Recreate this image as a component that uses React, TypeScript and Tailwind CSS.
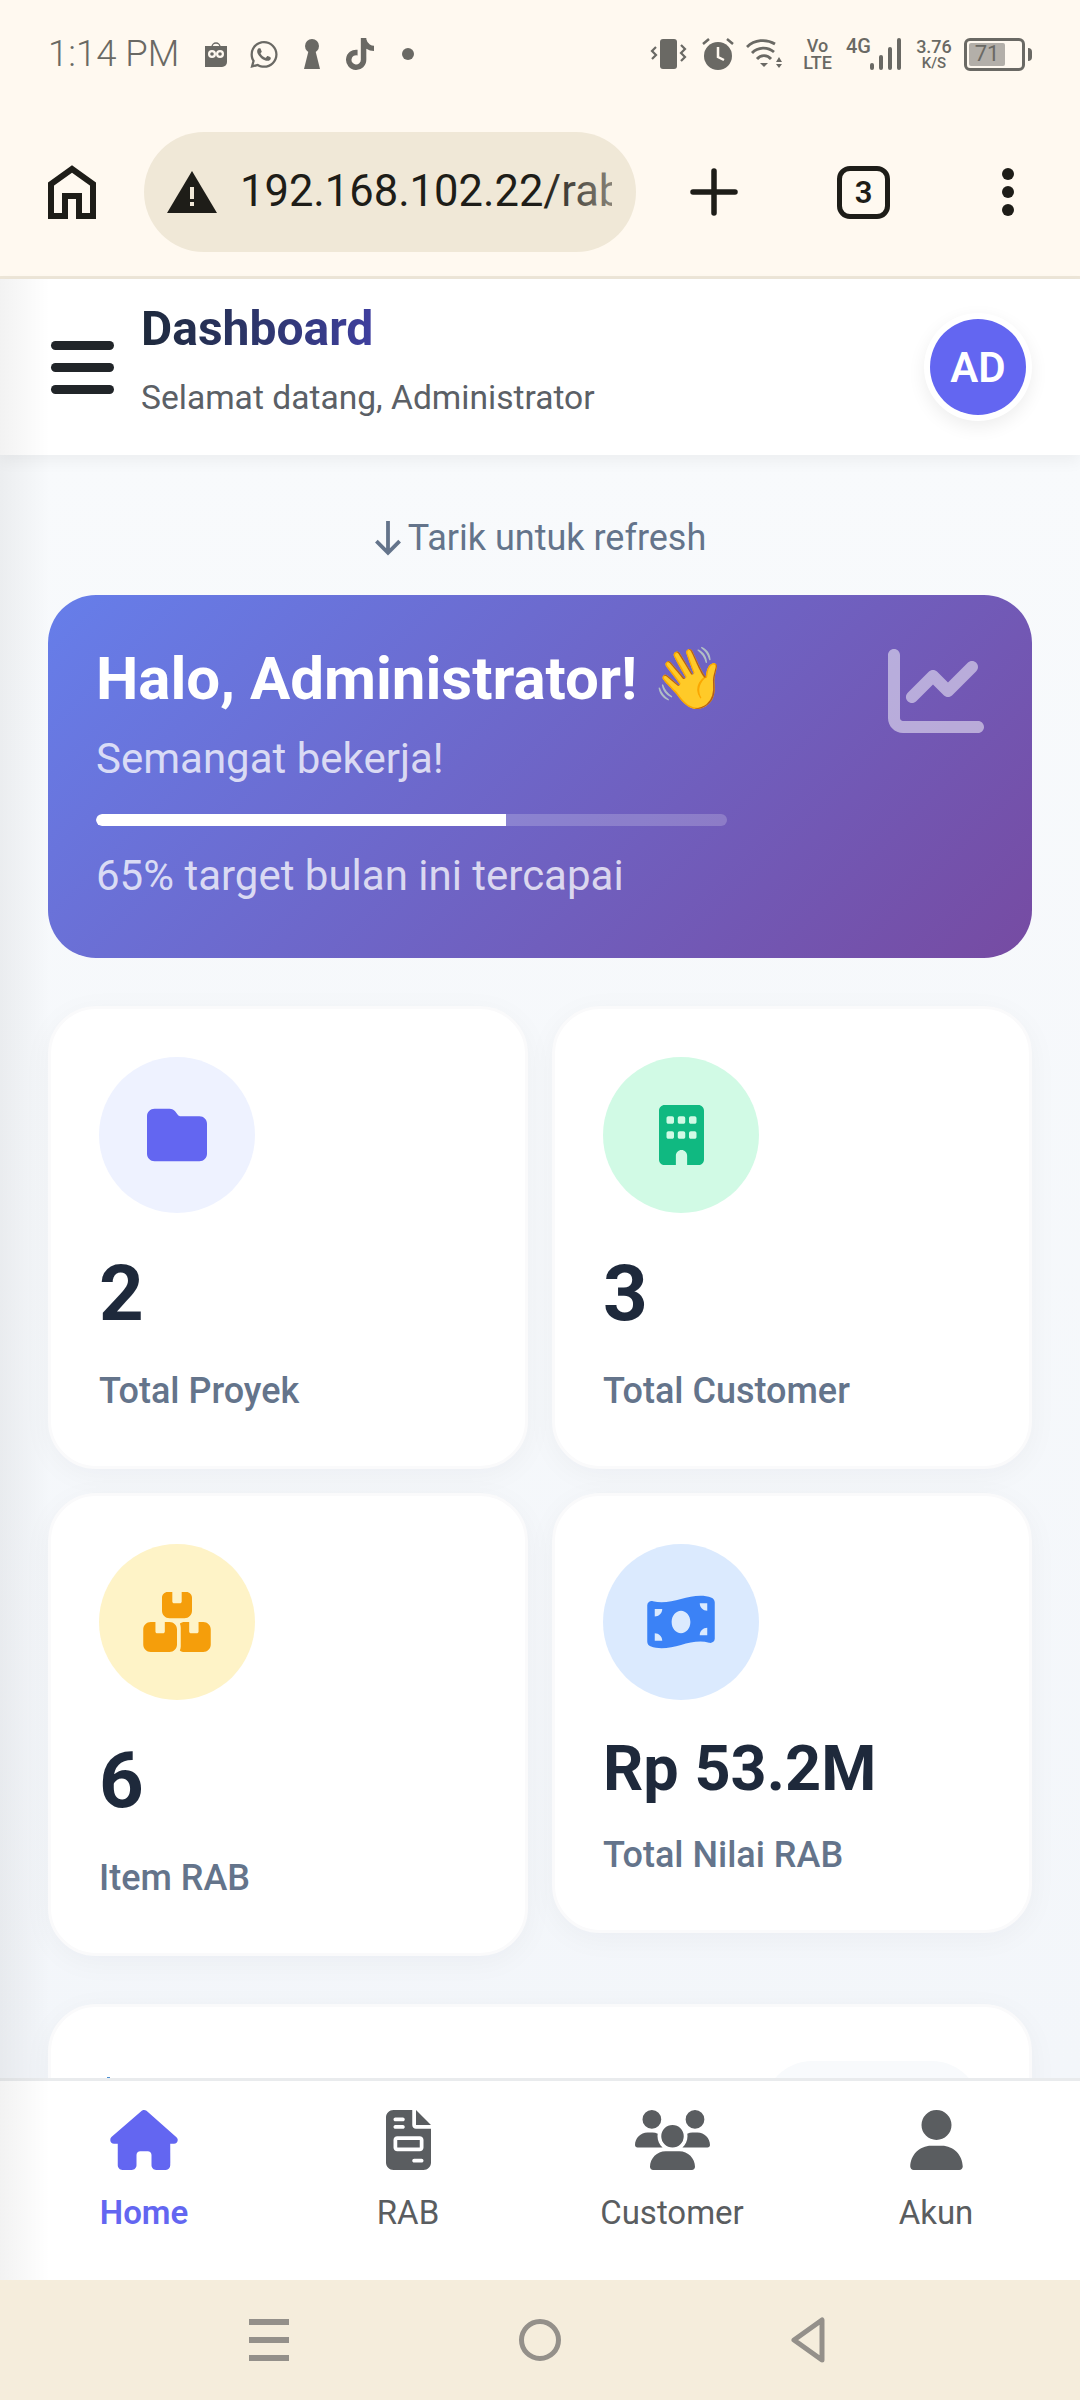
import React from "react";
import { FaFolder, FaBuilding, FaBoxesStacked, FaMoneyBillWave, FaChartLine, FaHouse, FaFileInvoice, FaUsers, FaUser, FaWhatsapp, FaTiktok } from "react-icons/fa6";

function StatusBar() {
  return (
    <div className="h-[108px] pl-[48px] pr-[48px] flex items-center justify-between text-[#6a6964]">
      <div className="flex items-center">
        <span className="text-[36.500px] font-light leading-none w-[156px] whitespace-nowrap">1:14 PM</span>
        <svg viewBox="0 0 24 27" className="w-[24px] h-[27px]">
          <path d="M8 6a4 4 0 0 1 8 0" fill="none" stroke="currentColor" strokeWidth="1.4" />
          <path d="M1 5h22v16a5 5 0 0 1-5 5H1z" fill="currentColor" />
          <circle cx="8" cy="13" r="4" fill="#fff9f0" /><circle cx="16" cy="13" r="4" fill="#fff9f0" />
          <circle cx="8" cy="13" r="1.8" fill="currentColor" /><circle cx="16" cy="13" r="1.8" fill="currentColor" />
        </svg>
        <FaWhatsapp className="w-[30px] h-[31px] ml-[21px]" />
        <svg viewBox="0 0 16 30" className="w-[16px] h-[30px] ml-[25px]">
          <circle cx="8" cy="7" r="7" fill="currentColor" /><path d="M5 10h6l5 20H0z" fill="currentColor" />
        </svg>
        <FaTiktok className="w-[30px] h-[32px] ml-[25px]" />
        <div className="w-[12px] h-[12px] rounded-full bg-current ml-[27px]" />
      </div>
      <div className="flex items-center">
        <svg viewBox="0 0 37 30" className="w-[37px] h-[30px]">
          <rect x="10" y="0" width="17" height="30" rx="3" fill="currentColor" />
          <path d="M6 8 2 12l4 4-4 4M31 6l4 4-4 4 4 4-4 4" fill="none" stroke="currentColor" strokeWidth="2.200" />
        </svg>
        <svg viewBox="0 0 32 32" className="w-[32px] h-[32px] ml-[15px]">
          <circle cx="16" cy="18" r="14" fill="currentColor" />
          <path d="M16 9v10l6 3" fill="none" stroke="#fff9f0" strokeWidth="2.500" />
          <path d="M1 6 7 1M31 6l-6-5" stroke="currentColor" strokeWidth="2.500" />
        </svg>
        <svg viewBox="0 0 38 30" className="w-[38px] h-[30px] ml-[12px]">
          <path d="M1 8a23 23 0 0 1 28-3M6 14a16 16 0 0 1 22-1M11 20a9 9 0 0 1 14 0" fill="none" stroke="currentColor" strokeWidth="2.800" />
          <path d="M14 24h8l-4 4z" fill="currentColor" />
          <path d="M33 18l3 5h-6zM30 25h6l-3 4z" fill="currentColor" />
        </svg>
        <div className="ml-[19px] w-[29px] flex flex-col items-center text-[18px] font-medium leading-[17px]"><span>Vo</span><span>LTE</span></div>
        <div className="ml-[14px] h-[32px] relative w-[55px]">
          <span className="absolute left-0 top-[-2px] text-[20px] font-medium leading-[20px]">4G</span>
          <div className="absolute right-0 bottom-0 flex items-end gap-[5px]">
            <div className="w-[4px] h-[7px] bg-current rounded-full" /><div className="w-[4px] h-[15px] bg-current rounded-full" /><div className="w-[4px] h-[23px] bg-current rounded-full" /><div className="w-[4px] h-[32px] bg-current rounded-full" />
          </div>
        </div>
        <div className="ml-[14px] w-[38px] flex flex-col items-center font-medium"><span className="text-[18px] leading-[18px]">3.76</span><span className="text-[15px] leading-[15px]">K/S</span></div>
        <div className="ml-[11px] w-[61px] h-[33px] border-[3px] border-current rounded-[6px] p-[2px] flex">
          <div className="w-[36px] h-full bg-[#b3afa9] rounded-[2px] flex items-center justify-center text-[22px] leading-none">71</div>
        </div>
        <div className="ml-[3px] w-[4px] h-[13px] bg-current rounded-r-full" />
      </div>
    </div>
  );
}

function Toolbar() {
  return (
    <div className="h-[168px] flex items-center text-[#1e1d18]">
      <svg viewBox="0 0 48 54" className="w-[48px] h-[54px] ml-[48px]">
        <path d="M3 51V19L24 4l21 15v32H31V31H17v20z" fill="none" stroke="currentColor" strokeWidth="6" />
      </svg>
      <div className="ml-[48px] w-[492px] h-[120px] rounded-full bg-[#f0e8d7] flex items-center pl-[23px]">
        <svg viewBox="0 0 50 42" className="w-[50px] h-[42px] shrink-0">
          <path d="M25 0 50 42H0z" fill="currentColor" />
          <rect x="23" y="16" width="4" height="12" fill="#f0e8d7" /><rect x="23" y="31" width="4" height="4" fill="#f0e8d7" />
        </svg>
        <div className="ml-[23px] w-[372px] overflow-hidden relative">
          <span className="block text-[43.500px] leading-[60px] whitespace-nowrap">192.168.102.22/rab</span>
          <div className="absolute right-0 top-0 bottom-0 w-[70px] bg-gradient-to-r from-transparent to-[#f0e8d7]/50" />
        </div>
      </div>
      <svg viewBox="0 0 48 48" className="w-[48px] h-[48px] ml-[54px]">
        <path d="M24 3v42M3 24h42" stroke="currentColor" strokeWidth="5.500" strokeLinecap="round" />
      </svg>
      <div className="ml-[99px] w-[53px] h-[53px] border-[5px] border-current rounded-[13px] flex items-center justify-center text-[31px] font-semibold leading-none">3</div>
      <div className="ml-[112px] flex flex-col gap-[6px]">
        <div className="w-[12px] h-[12px] rounded-full bg-current" /><div className="w-[12px] h-[12px] rounded-full bg-current" /><div className="w-[12px] h-[12px] rounded-full bg-current" />
      </div>
    </div>
  );
}

function Stat({ bg, icon, value, label, small }: { bg: string; icon: React.ReactNode; value: string; label: string; small?: boolean }) {
  return (
    <div className="bg-white rounded-[48px] border-[3px] border-[#fafafb] p-[48px] shadow-[0_6px_30px_rgba(15,23,42,0.04)] self-start w-full">
      <div className={`w-[156px] h-[156px] rounded-full flex items-center justify-center ${bg}`}>{icon}</div>
      <div className={`mt-[22px] font-bold text-[#1e293b] ${small ? "text-[63px] leading-[94px]" : "text-[78px] leading-[117px]"}`}>{value}</div>
      <div className="mt-[12px] text-[36px] leading-[54px] font-medium text-[#64748b]">{label}</div>
    </div>
  );
}

function NavItem({ icon, label, active }: { icon: React.ReactNode; label: string; active?: boolean }) {
  return (
    <div className={`flex flex-col items-center ${active ? "text-[#6366f1]" : "text-[#5a5d60]"}`}>
      <div className="h-[62px] flex items-center justify-center">{icon}</div>
      <span className={`mt-[18px] text-[33px] leading-[48px] ${active ? "font-semibold" : "font-normal"}`}>{label}</span>
    </div>
  );
}

export default function App() {
  return (
    <div className="w-[1080px] h-[2400px] flex flex-col overflow-hidden relative font-[Roboto,sans-serif] bg-[#f8fafc]">
      <div className="bg-[#fff9f0] border-b-[3px] border-[#ede6d8] shrink-0">
        <StatusBar />
        <Toolbar />
      </div>
      <div className="bg-white h-[176px] shrink-0 flex items-center pl-[51px] pr-[54px] shadow-[0_6px_15px_rgba(0,0,0,0.05)] relative z-10">
        <div className="w-[63px] flex flex-col gap-[13px]">
          <div className="h-[9px] rounded-full bg-[#212529]" /><div className="h-[9px] rounded-full bg-[#212529]" /><div className="h-[9px] rounded-full bg-[#212529]" />
        </div>
        <div className="ml-[27px] flex-1 flex flex-col items-start mt-[-18px]">
          <span className="text-[48px] leading-[72px] font-bold bg-gradient-to-r from-[#1e293b] to-[#3f3f9f] bg-clip-text text-transparent">Dashboard</span>
          <span className="text-[33.600px] leading-[50px] mt-[8px] text-[#5b6066]">Selamat datang, Administrator</span>
        </div>
        <div className="w-[96px] h-[96px] rounded-full bg-[#6366f1] text-white font-semibold text-[42px] flex items-center justify-center shadow-[0_0_0_6px_#ffffff,0_6px_18px_6px_rgba(0,0,0,0.07)]">AD</div>
      </div>
      <main className="flex-1 min-h-0 overflow-hidden px-[48px] bg-gradient-to-b from-[#f8fafc] to-[#f3f6fa]">
        <div className="h-[140px] flex items-center justify-center pt-[25px] pr-[2px] text-[#64748b] text-[36px]">
          <svg viewBox="0 0 28 36" className="w-[32px] h-[38px] mr-[4px]"><path d="M14 2v30M3 21l11 11 11-11" fill="none" stroke="currentColor" strokeWidth="3.600" /></svg>
          Tarik untuk refresh
        </div>
        <div className="h-[363px] rounded-[48px] bg-[linear-gradient(135deg,#667eea,#764ba2)] p-[48px] relative text-white">
          <div className="text-[60px] leading-[72px] font-bold">Halo, Administrator! <span className="font-['Noto_Color_Emoji']">👋</span></div>
          <div className="text-[42px] leading-[63px] mt-[12px] text-white/75">Semangat bekerja!</div>
          <div className="mt-[24px] w-[631px] h-[12px] rounded-full bg-white/20 overflow-hidden"><div className="h-full w-[65%] bg-white rounded-l-full" /></div>
          <div className="text-[42px] leading-[63px] mt-[18px] text-white/75">65% target bulan ini tercapai</div>
          <FaChartLine className="absolute right-[48px] top-[48px] w-[96px] h-[96px] text-white/50" />
        </div>
        <div className="mt-[48px] grid grid-cols-2 gap-[24px]">
          <Stat bg="bg-[#eef2ff]" icon={<FaFolder className="w-[60px] h-[60px] text-[#6366f1]" />} value="2" label="Total Proyek" />
          <Stat bg="bg-[#d1fae5]" icon={<FaBuilding className="w-[45px] h-[60px] text-[#10b981]" />} value="3" label="Total Customer" />
          <Stat bg="bg-[#fef3c7]" icon={<FaBoxesStacked className="w-[68px] h-[60px] text-[#f59e0b]" />} value="6" label="Item RAB" />
          <Stat bg="bg-[#dbeafe]" icon={<FaMoneyBillWave className="w-[68px] h-[60px] text-[#3b82f6]" />} value="Rp 53.2M" label="Total Nilai RAB" small />
        </div>
        <div className="mt-[48px] h-[300px] bg-white rounded-[48px] border-[3px] border-[#fafafb] shadow-[0_6px_30px_rgba(15,23,42,0.04)] pl-[56px] pr-[49px] pt-[54px] flex justify-between items-start">
          <div className="mt-[16px] w-[3px] h-[3px] bg-[#4a8fd0]" />
          <div className="w-[216px] h-[100px] rounded-[48px] bg-[#f8fafc]" />
        </div>
      </main>
      <nav className="h-[202px] shrink-0 bg-white border-t-[3px] border-[#e9ebed] px-[12px] pt-[28px] grid grid-cols-4 items-start relative z-10">
        <NavItem active icon={<FaHouse className="w-[68px] h-[60px]" />} label="Home" />
        <NavItem icon={<FaFileInvoice className="w-[45px] h-[60px]" />} label="RAB" />
        <NavItem icon={<FaUsers className="w-[75px] h-[60px]" />} label="Customer" />
        <NavItem icon={<FaUser className="w-[53px] h-[60px]" />} label="Akun" />
      </nav>
      <div className="h-[120px] shrink-0 bg-[#f5eddc] flex items-center justify-center gap-[230px] pr-[6px] text-[#94908a] relative z-10">
        <div className="w-[40px] flex flex-col gap-[12px]"><div className="h-[6px] bg-current" /><div className="h-[6px] bg-current" /><div className="h-[6px] bg-current" /></div>
        <div className="w-[42px] h-[42px] rounded-full border-[5px] border-current" />
        <svg viewBox="0 0 34 46" className="w-[34px] h-[46px]"><path d="M31 3v40L3 23z" fill="none" stroke="currentColor" strokeWidth="5" strokeLinejoin="round" /></svg>
      </div>
      <div className="absolute left-0 top-[279px] bottom-[120px] w-[50px] bg-gradient-to-r from-black/[0.05] to-transparent z-20 pointer-events-none" />
    </div>
  );
}
